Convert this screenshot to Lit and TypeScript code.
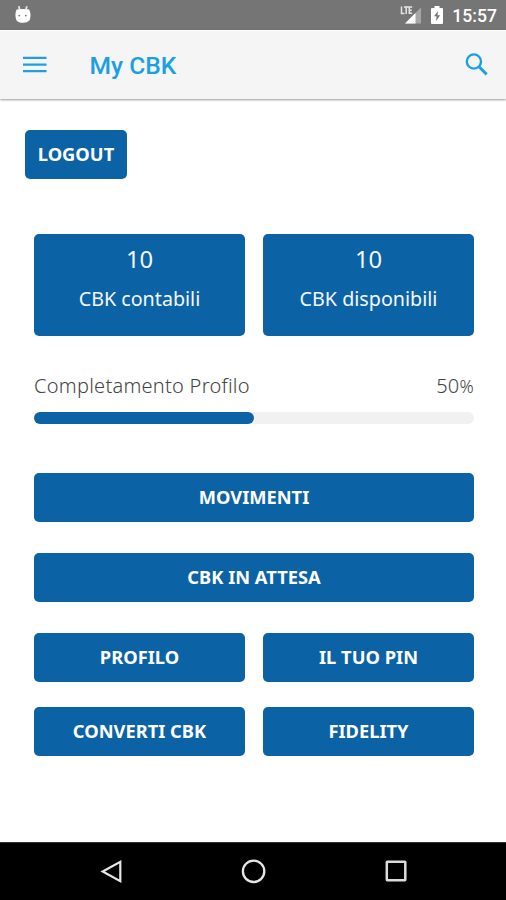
import { LitElement, html, css } from "lit";
import { customElement, property } from "lit/decorators.js";

@customElement("status-bar")
class StatusBar extends LitElement {
  static styles = css`
    :host { display: flex; align-items: center; height: 30px; background: #757575; color: #fff; box-sizing: border-box; padding: 0 9px 0 14px; }
    .spacer { flex: 1; }
    svg { display: block; flex: none; }
    .signal { margin-right: 9px; }
    .battery { margin-right: 9px; }
    .time { font: 500 17.6px/30px Roboto, sans-serif; padding-top: 1px; }
  `;
  render() {
    return html`
      <svg width="18" height="20" viewBox="0 0 18 20" fill="#fff">
        <path d="M4.9 1.2 5.6 5M12.8 1.2 12 5" stroke="#e4e4e4" stroke-width="1.8"/>
        <path d="M2.6 4.5Q9 3.3 15.2 4.5Q17.8 10 15.4 15.5Q13.5 17.8 9 17.8Q4.5 17.8 2.6 15.5Q.2 10 2.6 4.5Z"/>
        <circle cx="5.2" cy="10.6" r=".9" fill="#757575"/><circle cx="11.8" cy="10.6" r=".9" fill="#757575"/>
      </svg>
      <div class="spacer"></div>
      <svg class="signal" width="22" height="20" viewBox="0 0 22 20">
        <path d="M5 18.5 21 2.5V18.5Z" fill="#a6a6a6"/>
        <path d="M5 18.5 15.5 8V18.5Z" fill="#fff"/>
        <path d="M0 0H12.5V10H0Z" fill="#757575"/>
        <path d="M1.5 1.5V8.5H4.5M4 2H8.5M6.2 2V9M12.2 2H9.3V8.3H12.2M9.3 5.2H11.7" fill="none" stroke="#e6e6e6" stroke-width="1.5"/>
      </svg>
      <svg class="battery" width="12" height="18" viewBox="0 0 12 18">
        <path d="M3.5 0H8.5V2H11Q12 2 12 3V17Q12 18 11 18H1Q0 18 0 17V3Q0 2 1 2H3.5Z" fill="#fff"/>
        <path d="M7 5 3 10.3H5.5L5 15 9.2 9.3H6.5Z" fill="#757575"/>
      </svg>
      <span class="time">15:57</span>
    `;
  }
}

@customElement("app-header")
class AppHeader extends LitElement {
  static styles = css`
    :host { display: flex; align-items: center; box-sizing: border-box; height: 69px; padding: 0 18px 0 23px; background: #f5f5f5; color: #1ca0e3; border-top: 1px solid #fff; box-shadow: 0 1px 2px rgba(0, 0, 0, 0.4); }
    svg { display: block; flex: none; }
    .title { flex: 1; margin: 0 0 0 42.5px; font: 500 24.6px/40px Roboto, sans-serif; padding-top: 1px; }
    .search { margin-bottom: 2px; }
  `;
  render() {
    return html`
      <svg width="24" height="18" viewBox="0 0 24 18"><path d="M0 1.9H23.5M0 8.7H23.5M0 15.2H23.5" stroke="currentColor" stroke-width="2.3"/></svg>
      <h1 class="title">My CBK</h1>
      <svg class="search" width="23" height="23" viewBox="0 0 23 23" fill="none" stroke="currentColor" stroke-width="2.4"><circle cx="8.9" cy="8.5" r="7.1"/><path d="M14 13.8 21.7 21.4" stroke-width="2.9"/></svg>
    `;
  }
}

@customElement("cbk-button")
class CbkButton extends LitElement {
  @property() label = "";
  static styles = css`
    :host { display: block; }
    .button { display: block; width: 100%; height: 49px; padding: 0 0 2px; border: 0; border-radius: 5px; background: #0b62a5; color: #fff; font: 700 18.3px/46px "Noto Sans", sans-serif; white-space: nowrap; }
  `;
  render() {
    return html`<button class="button">${this.label}</button>`;
  }
}

@customElement("balance-card")
class BalanceCard extends LitElement {
  @property({ type: Number }) value = 0;
  @property() label = "";
  static styles = css`
    :host { display: block; box-sizing: border-box; height: 102px; padding-top: 5px; border-radius: 5px; background: #0b62a5; color: #f4f8ff; text-align: center; font-family: "Noto Sans", sans-serif; }
    .value { font-size: 23.8px; line-height: 40px; }
    .label { font-size: 19.7px; line-height: 39px; }
  `;
  render() {
    return html`<div class="value">${this.value}</div><div class="label">${this.label}</div>`;
  }
}

@customElement("profile-progress")
class ProfileProgress extends LitElement {
  @property({ type: Number }) percent = 0;
  static styles = css`
    :host { display: block; font: 300 20px/28px "Noto Sans", sans-serif; color: #444; letter-spacing: 0.26px; }
    .row { display: flex; justify-content: space-between; padding-top: 1px; }
    .sign { font-size: 17.5px; }
    .track { height: 12px; margin-top: 12px; border-radius: 6px; background: #f1f1f1; }
    .fill { height: 100%; border-radius: 6px; background: #0b62a5; }
  `;
  render() {
    return html`
      <div class="row"><span>Completamento Profilo</span><span>${this.percent}<span class="sign">%</span></span></div>
      <div class="track"><div class="fill" style="width:${this.percent}%"></div></div>
    `;
  }
}

@customElement("nav-bar")
class NavBar extends LitElement {
  static styles = css`
    :host { display: flex; align-items: center; justify-content: space-between; box-sizing: border-box; height: 58px; padding: 0 98px 0 99px; background: #000; border-top: 1px solid #333; }
    svg { display: block; }
  `;
  render() {
    return html`
      <svg width="25" height="26" viewBox="0 0 25 26" fill="none" stroke="#e6e6e6" stroke-width="2.2"><path d="M3.7 12.5 21.3 2.8V22.2Z"/></svg>
      <svg width="26" height="26" viewBox="0 0 26 26" fill="none" stroke="#e6e6e6" stroke-width="2.3"><circle cx="12.6" cy="12.3" r="10.7"/></svg>
      <svg width="24" height="26" viewBox="0 0 24 26" fill="none" stroke="#dcdcdc" stroke-width="2.5"><rect x="2.8" y="2.7" width="18.5" height="18.5" rx=".5"/></svg>
    `;
  }
}

@customElement("app-root")
class AppRoot extends LitElement {
  static styles = css`
    :host { display: flex; flex-direction: column; height: 900px; background: #fff; overflow: hidden; }
    .content { flex: 1; padding: 31px 32px 0 34px; }
    .logout { width: 102px; margin-left: -9px; }
    .pair { display: grid; grid-template-columns: 1fr 1fr; column-gap: 18px; row-gap: 25px; }
    .cards { margin-top: 55px; }
    .progress { margin-top: 35px; }
    .wide { margin-top: 31px; }
    .first { margin-top: 49px; }
    .actions { margin-top: 31px; }
  `;
  render() {
    return html`
      <status-bar></status-bar>
      <app-header></app-header>
      <main class="content">
        <cbk-button class="logout" label="LOGOUT"></cbk-button>
        <div class="pair cards">
          <balance-card value="10" label="CBK contabili"></balance-card>
          <balance-card value="10" label="CBK disponibili"></balance-card>
        </div>
        <profile-progress class="progress" percent="50"></profile-progress>
        <cbk-button class="first" label="MOVIMENTI"></cbk-button>
        <cbk-button class="wide" label="CBK IN ATTESA"></cbk-button>
        <div class="pair actions">
          <cbk-button label="PROFILO"></cbk-button>
          <cbk-button label="IL TUO PIN"></cbk-button>
          <cbk-button label="CONVERTI CBK"></cbk-button>
          <cbk-button label="FIDELITY"></cbk-button>
        </div>
      </main>
      <nav-bar></nav-bar>
    `;
  }
}
